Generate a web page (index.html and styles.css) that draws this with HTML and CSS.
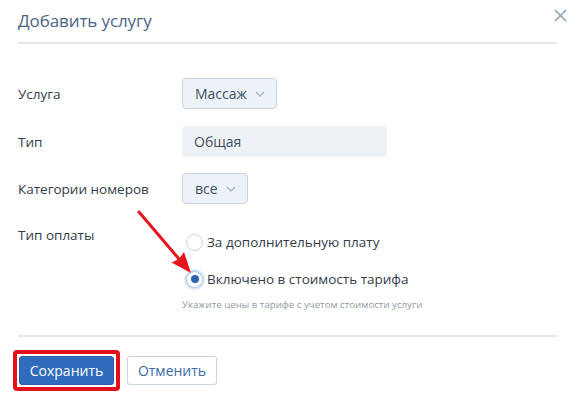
FILE: index.html
```html
<!DOCTYPE html>
<html lang="ru">
<head>
<meta charset="utf-8">
<title>Добавить услугу</title>
<link rel="stylesheet" href="styles.css">
</head>
<body>
<div class="dialog">
  <header class="dlg-head">
    <h1 class="dlg-title">Добавить услугу</h1>
    <button class="dlg-close" aria-label="Закрыть">
      <svg width="13" height="13" viewBox="0 0 13 13"><path d="M1 1L12 12M12 1L1 12" stroke="#8ea2bc" stroke-width="1.6" fill="none"/></svg>
    </button>
  </header>

  <div class="form">
    <div class="row row-center">
      <div class="lbl">Услуга</div>
      <div class="ctl">
        <button class="select">Массаж
          <svg class="chev" width="10" height="6" viewBox="0 0 10 6"><path d="M1 1L5 5L9 1" stroke="#a4b3c7" stroke-width="1.3" fill="none"/></svg>
        </button>
      </div>
    </div>
    <div class="row row-center">
      <div class="lbl">Тип</div>
      <div class="ctl"><div class="input">Общая</div></div>
    </div>
    <div class="row row-center">
      <div class="lbl">Категории номеров</div>
      <div class="ctl">
        <button class="select">все
          <svg class="chev" width="10" height="6" viewBox="0 0 10 6"><path d="M1 1L5 5L9 1" stroke="#a4b3c7" stroke-width="1.3" fill="none"/></svg>
        </button>
      </div>
    </div>
    <div class="row row-pay">
      <div class="lbl">Тип оплаты</div>
      <div class="ctl radios">
        <label class="radio"><span class="dot"></span>За дополнительную плату</label>
        <label class="radio checked"><span class="dot"></span>Включено в стоимость тарифа</label>
        <div class="hint">Укажите цены в тарифе с учетом стоимости услуги</div>
      </div>
    </div>
  </div>

  <footer class="dlg-foot">
    <span class="highlight"><button class="btn btn-primary">Сохранить</button></span>
    <button class="btn btn-secondary">Отменить</button>
  </footer>

  <svg class="arrow" width="575" height="405" viewBox="0 0 575 405">
    <line x1="139" y1="212" x2="179" y2="259" stroke="#e8141c" stroke-width="3" stroke-linecap="round"/>
    <polygon points="191,273 171.5,262.5 179,259 184,252" fill="#e8141c"/>
  </svg>
</div>
</body>
</html>
```

FILE: styles.css
```css
* { box-sizing: border-box; }
html, body { margin: 0; padding: 0; background: #fff; }
body {
  font-family: "Open Sans", "Noto Sans", Arial, sans-serif;
  color: #333c48;
  width: 575px;
  height: 405px;
  overflow: hidden;
}
.dialog {
  position: relative;
  padding: 0 18px;
  height: 405px;
}
.dlg-head {
  height: 44px;
  border-bottom: 2px solid #e4e7eb;
  display: flex;
  align-items: center;
  padding-bottom: 2px;
}
.dlg-title {
  margin: 0;
  font-size: 17px;
  font-weight: 400;
  color: #4a6584;
  letter-spacing: -0.1px;
}
.dlg-close {
  position: absolute;
  right: 8px;
  top: 9px;
  border: 0;
  background: none;
  padding: 0;
  width: 13px;
  height: 13px;
  display: flex;
}
.form {
  padding-top: 34px;
  display: flex;
  flex-direction: column;
}
.row {
  display: grid;
  grid-template-columns: 164px 1fr;
}
.row-center { align-items: center; }
.row + .row { margin-top: 16px; }
.row-center:first-child + .row { margin-top: 17px; }
.row-pay { margin-top: 21px !important; align-items: start; }
.lbl {
  font-size: 13.5px;
  line-height: 20px;
  color: #333c48;
}
.select {
  display: inline-flex;
  align-items: center;
  height: 31px;
  padding: 0 11px 0 12px;
  gap: 8px;
  background: #edf2f9;
  border: 1px solid #c9d4e2;
  border-radius: 4px;
  font-family: inherit;
  font-size: 14px;
  color: #3e4f63;
}
.select .chev { margin-top: 1px; }
.input {
  width: 205px;
  height: 31px;
  background: #eef2f7;
  border-radius: 4px;
  padding: 0 12px;
  display: flex;
  align-items: center;
  font-size: 14px;
  color: #3e4f63;
}
.radios {
  padding-top: 5px;
  display: flex;
  flex-direction: column;
}
.radio {
  display: flex;
  align-items: center;
  height: 24px;
  font-size: 13.5px;
  color: #333c48;
  padding-left: 4px;
}
.radio + .radio { margin-top: 13px; }
.dot {
  width: 17px;
  height: 17px;
  border-radius: 50%;
  border: 1px solid #c3d2e5;
  background: #fff;
  margin-right: 4px;
  flex: none;
  position: relative;
}
.checked .dot {
  border-color: #a9c3e3;
  box-shadow: 0 0 0 2px #dce8f6;
}
.checked .dot::after {
  content: "";
  position: absolute;
  left: 3.5px;
  top: 3.5px;
  width: 8px;
  height: 8px;
  border-radius: 50%;
  background: #2d66ad;
}
.hint {
  margin-top: 7px;
  font-size: 9.7px;
  line-height: 14px;
  color: #9099a4;
}
.dlg-foot {
  margin-top: 23px;
  border-top: 2px solid #e4e7eb;
  padding: 13px 0 0 0;
  display: flex;
  align-items: center;
  gap: 7px;
}
.highlight {
  margin-left: -5px;
  display: inline-flex;
  padding: 2px;
  border: 4px solid #e3101c;
  border-radius: 4px;
}
.btn {
  height: 29px;
  padding: 0 12px;
  border-radius: 3px;
  font-family: inherit;
  font-size: 14px;
  display: inline-flex;
  align-items: center;
  justify-content: center;
}
.btn-primary {
  width: 95px;
  background: #2f6cbd;
  border: 1px solid #2a60a9;
  color: #fff;
}
.btn-secondary {
  width: 90px;
  background: #fff;
  border: 1px solid #c6d3e3;
  color: #3a6aa8;
}
.arrow {
  position: absolute;
  left: 0;
  top: 0;
  pointer-events: none;
}
```
